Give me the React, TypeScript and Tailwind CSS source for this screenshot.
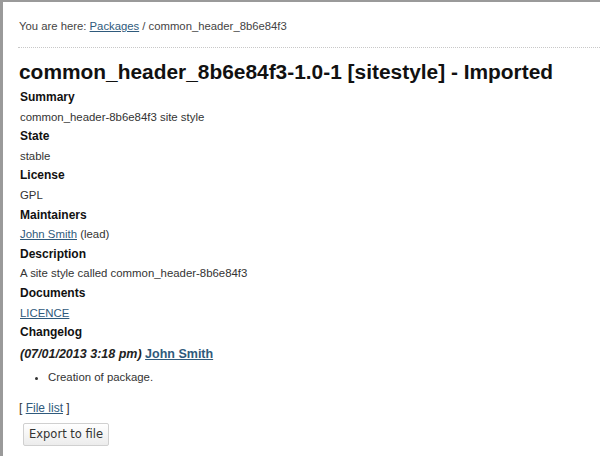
import React from "react";

const linkCls = "text-[#2f5a7c] underline underline-offset-1";

const Field = ({ label, children }: { label: string; children: React.ReactNode }) => (
  <div>
    <div className="font-bold text-[12px] text-[#111] leading-[19.6px]">{label}</div>
    <div className="text-[11.4px] text-[#333] leading-[19.6px]">{children}</div>
  </div>
);

export default function App() {
  return (
    <div
      className="w-[600px] h-[456px] overflow-hidden bg-white border-t-2 border-l-[3px] border-[#9a9a9a]"
      style={{ fontFamily: '"Liberation Sans", Arial, sans-serif' }}
    >
      {/* breadcrumb */}
      <div className="pl-[16px] pt-[15px] text-[11.3px] leading-[18px] text-[#444]">
        You are here: <a className={linkCls}>Packages</a> / common_header_8b6e84f3
      </div>
      <div className="ml-[15px] mt-[12px] border-t border-dotted border-[#c8c8c8]" />

      <div className="pl-[16px]">
        <h1 className="mt-[12px] text-[20.9px] leading-[24px] font-bold text-[#111]">
          common_header_8b6e84f3-1.0-1 [sitestyle] - Imported
        </h1>

        <div className="mt-[4px] pl-[1px]">
          <Field label="Summary">common_header-8b6e84f3 site style</Field>
          <Field label="State">stable</Field>
          <Field label="License">GPL</Field>
          <Field label="Maintainers">
            <a className={linkCls}>John Smith</a> (lead)
          </Field>
          <Field label="Description">A site style called common_header-8b6e84f3</Field>
          <Field label="Documents">
            <a className={linkCls}>LICENCE</a>
          </Field>
          <div className="font-bold text-[12px] text-[#111] leading-[19.6px]">Changelog</div>
          <div className="mt-[1px] text-[12.5px] leading-[20px] font-bold text-[#222]">
            <i>(07/01/2013 3:18 pm)</i> <a className={linkCls}>John Smith</a>
          </div>
          <ul className="mt-[3px] pl-[28px] list-disc text-[11.4px] leading-[20px] text-[#333]">
            <li>Creation of package.</li>
          </ul>
        </div>

        <div className="mt-[12px] text-[12px] leading-[18px] text-[#333]">
          [ <a className={linkCls}>File list</a> ]
        </div>

        <button
          className="mt-[6px] ml-[4px] h-[23px] px-[5px] rounded-[2px] border border-[#d0d0d0] bg-gradient-to-b from-white to-[#ececec] text-[11.5px] text-[#333]"
          style={{ fontFamily: '"DejaVu Sans", Verdana, sans-serif' }}
        >
          Export to file
        </button>
      </div>
    </div>
  );
}
